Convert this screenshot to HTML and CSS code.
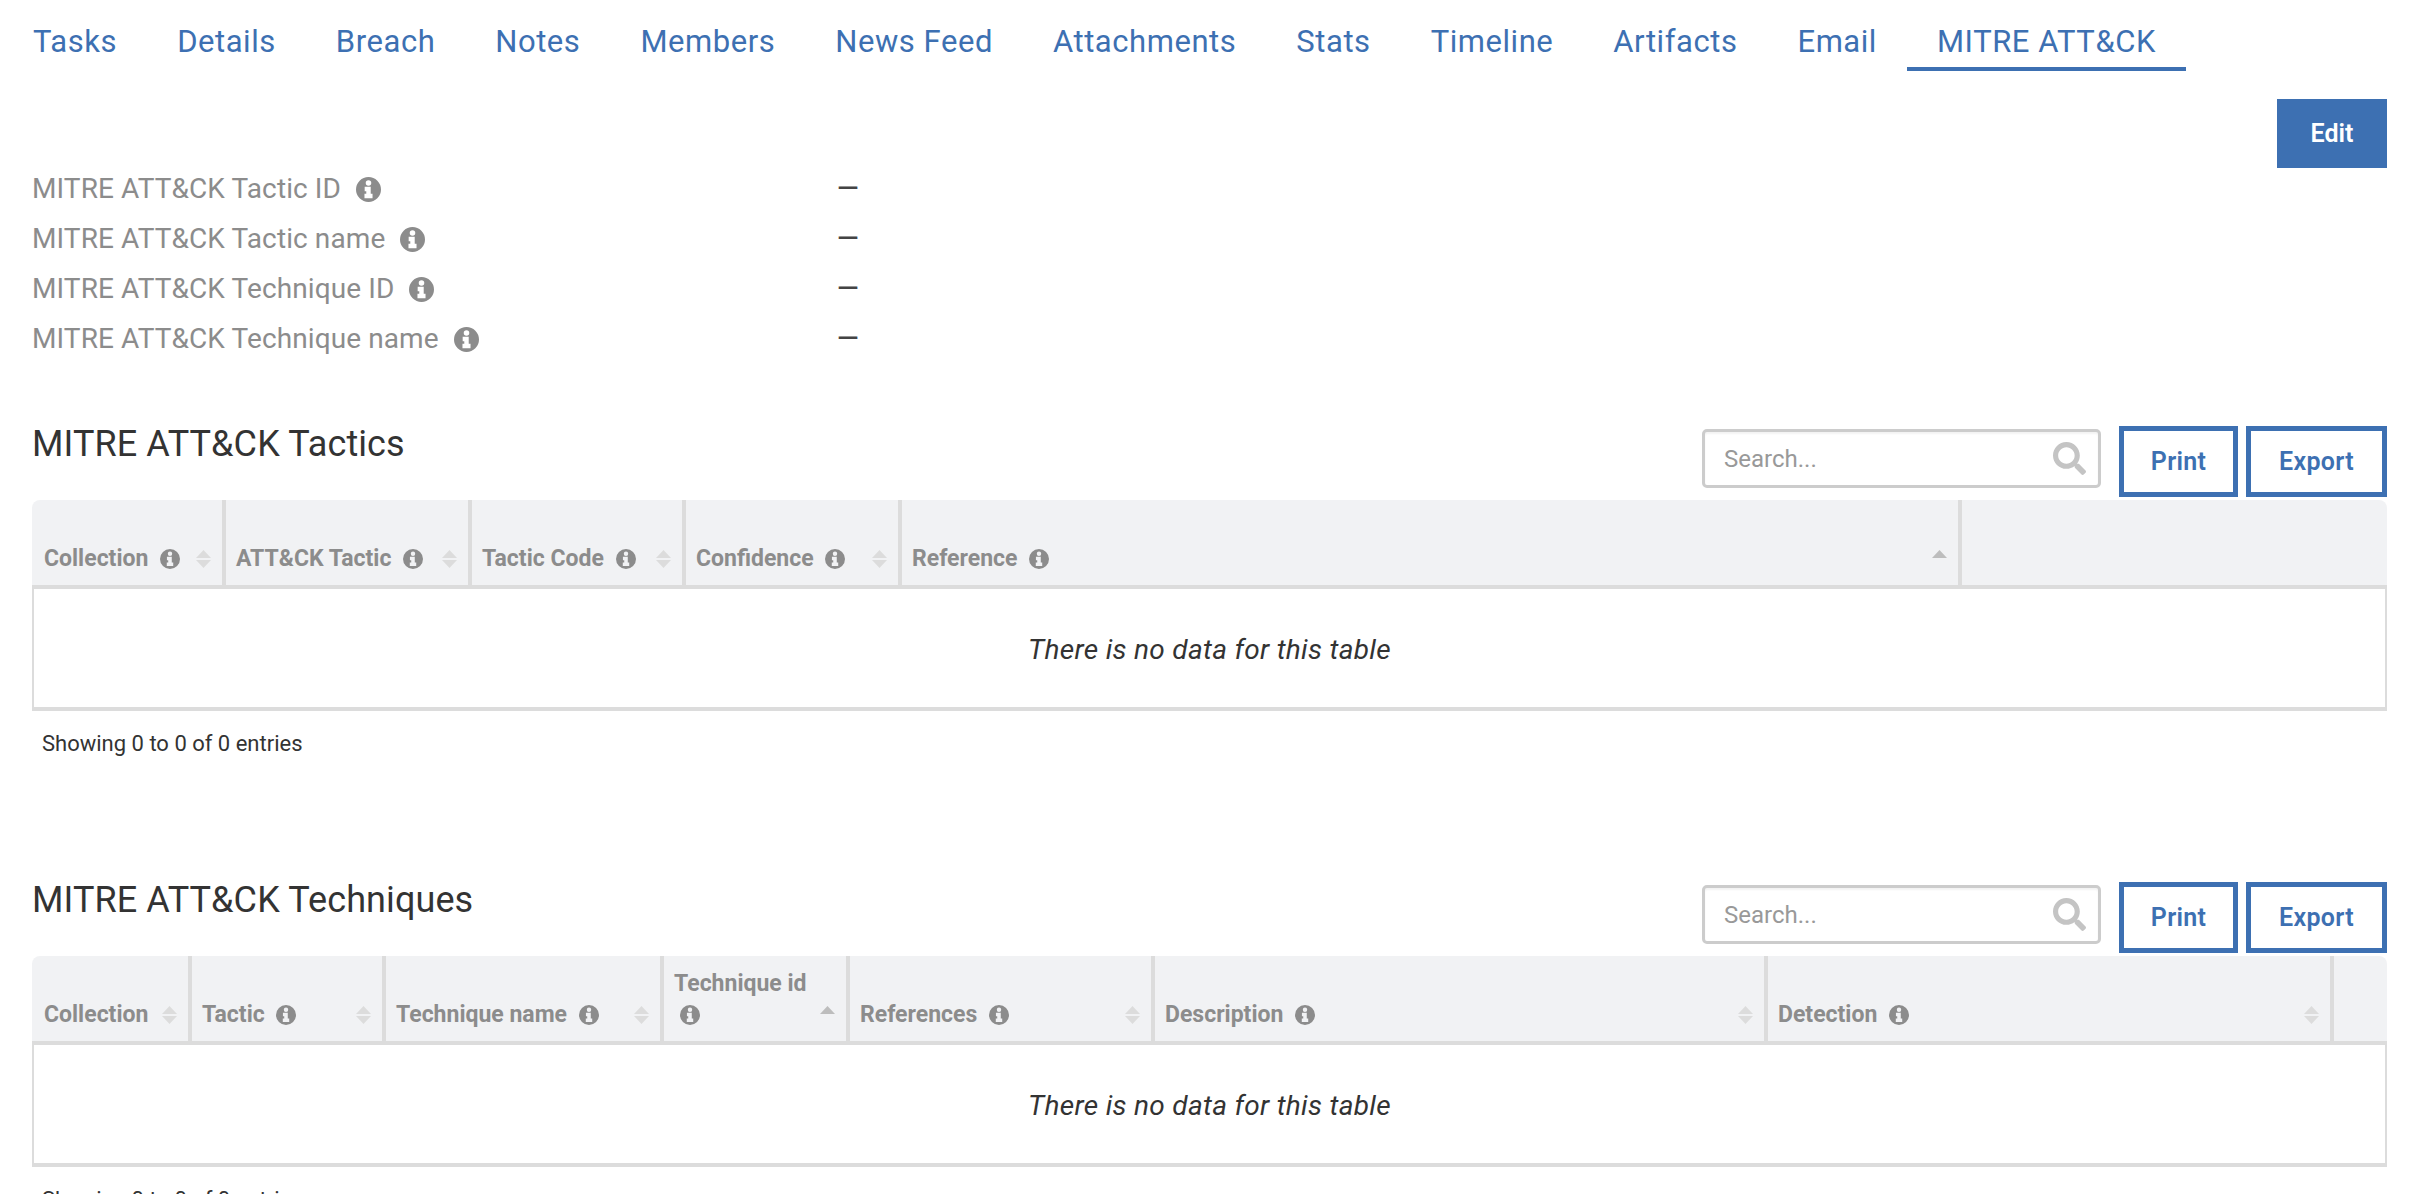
FILE: index.html
```html
<!DOCTYPE html>
<html>
<head>
    <title>MITRE ATT&amp;CK</title>
    <link rel="stylesheet" href="styles.css">
</head>
<body>
<svg class="defs" width="0" height="0">
    <symbol id="info" viewBox="8 8 496 496">
        <path fill-rule="evenodd" d="M256 8a248 248 0 1 0 0 496a248 248 0 1 0 0-496zM256 70a55 55 0 1 0 0 110a55 55 0 1 0 0-110zM180 200h120v140h36v90H176v-90h36v-50h-32z"/>
    </symbol>
    <symbol id="search" viewBox="0 0 512 512">
        <path d="M505 442.7L405.3 343c-4.5-4.5-10.6-7-17-7H372c27.6-35.3 44-79.7 44-128C416 93.1 322.9 0 208 0S0 93.1 0 208s93.1 208 208 208c48.3 0 92.7-16.4 128-44v16.3c0 6.4 2.5 12.5 7 17l99.7 99.7c9.4 9.4 24.6 9.4 33.9 0l28.3-28.3c9.4-9.4 9.4-24.6.1-34zM208 336c-70.7 0-128-57.2-128-128 0-70.7 57.2-128 128-128 70.7 0 128 57.2 128 128 0 70.7-57.2 128-128 128z"/>
    </symbol>
    <symbol id="sort" viewBox="0 0 15 18">
        <path d="M7.5 0l7.5 8H0z"/>
        <path d="M0 10h15l-7.5 8z"/>
    </symbol>
    <symbol id="sorted" viewBox="0 0 15 18">
        <path d="M7.5 0l7.5 8H0z"/>
    </symbol>
</svg>

<nav class="tabs">
    <a class="tab">Tasks</a>
    <a class="tab">Details</a>
    <a class="tab">Breach</a>
    <a class="tab">Notes</a>
    <a class="tab">Members</a>
    <a class="tab">News Feed</a>
    <a class="tab">Attachments</a>
    <a class="tab">Stats</a>
    <a class="tab">Timeline</a>
    <a class="tab">Artifacts</a>
    <a class="tab">Email</a>
    <a class="tab active">MITRE ATT&amp;CK</a>
</nav>

<div class="page">
    <div class="summary">
        <dl class="fields">
            <div class="field">
                <dt>MITRE ATT&amp;CK Tactic ID <svg class="info big"><use href="#info"/></svg></dt>
                <dd>&mdash;</dd>
            </div>
            <div class="field">
                <dt>MITRE ATT&amp;CK Tactic name <svg class="info big"><use href="#info"/></svg></dt>
                <dd>&mdash;</dd>
            </div>
            <div class="field">
                <dt>MITRE ATT&amp;CK Technique ID <svg class="info big"><use href="#info"/></svg></dt>
                <dd>&mdash;</dd>
            </div>
            <div class="field">
                <dt>MITRE ATT&amp;CK Technique name <svg class="info big"><use href="#info"/></svg></dt>
                <dd>&mdash;</dd>
            </div>
        </dl>
        <button class="edit">Edit</button>
    </div>

    <section class="section">
        <div class="section-head">
            <h2>MITRE ATT&amp;CK Tactics</h2>
            <div class="controls">
                <div class="search">
                    <span>Search...</span>
                    <svg><use href="#search"/></svg>
                </div>
                <button class="outline print">Print</button>
                <button class="outline export">Export</button>
            </div>
        </div>
        <table>
            <colgroup>
                <col class="t1">
                <col class="t2">
                <col class="t3">
                <col class="t4">
                <col class="t5">
                <col>
            </colgroup>
            <thead>
            <tr>
                <th><div class="cell"><span>Collection <svg class="info"><use href="#info"/></svg></span><svg class="sort"><use href="#sort"/></svg></div></th>
                <th><div class="cell"><span>ATT&amp;CK Tactic <svg class="info"><use href="#info"/></svg></span><svg class="sort"><use href="#sort"/></svg></div></th>
                <th><div class="cell"><span>Tactic Code <svg class="info"><use href="#info"/></svg></span><svg class="sort"><use href="#sort"/></svg></div></th>
                <th><div class="cell"><span>Confidence <svg class="info"><use href="#info"/></svg></span><svg class="sort"><use href="#sort"/></svg></div></th>
                <th><div class="cell"><span>Reference <svg class="info"><use href="#info"/></svg></span><svg class="sort on"><use href="#sorted"/></svg></div></th>
                <th></th>
            </tr>
            </thead>
            <tbody>
            <tr>
                <td colspan="6">There is no data for this table</td>
            </tr>
            </tbody>
        </table>
        <div class="showing">Showing 0 to 0 of 0 entries</div>
    </section>

    <section class="section">
        <div class="section-head">
            <h2>MITRE ATT&amp;CK Techniques</h2>
            <div class="controls">
                <div class="search">
                    <span>Search...</span>
                    <svg><use href="#search"/></svg>
                </div>
                <button class="outline print">Print</button>
                <button class="outline export">Export</button>
            </div>
        </div>
        <table>
            <colgroup>
                <col class="c1">
                <col class="c2">
                <col class="c3">
                <col class="c4">
                <col class="c5">
                <col class="c6">
                <col class="c7">
                <col>
            </colgroup>
            <thead>
            <tr>
                <th><div class="cell"><span>Collection</span><svg class="sort"><use href="#sort"/></svg></div></th>
                <th><div class="cell"><span>Tactic <svg class="info"><use href="#info"/></svg></span><svg class="sort"><use href="#sort"/></svg></div></th>
                <th><div class="cell"><span>Technique name <svg class="info"><use href="#info"/></svg></span><svg class="sort"><use href="#sort"/></svg></div></th>
                <th><div class="cell"><span>Technique id<br><svg class="info"><use href="#info"/></svg></span><svg class="sort on"><use href="#sorted"/></svg></div></th>
                <th><div class="cell"><span>References <svg class="info"><use href="#info"/></svg></span><svg class="sort"><use href="#sort"/></svg></div></th>
                <th><div class="cell"><span>Description <svg class="info"><use href="#info"/></svg></span><svg class="sort"><use href="#sort"/></svg></div></th>
                <th><div class="cell"><span>Detection <svg class="info"><use href="#info"/></svg></span><svg class="sort"><use href="#sort"/></svg></div></th>
                <th></th>
            </tr>
            </thead>
            <tbody>
            <tr>
                <td colspan="8">There is no data for this table</td>
            </tr>
            </tbody>
        </table>
        <div class="showing">Showing 0 to 0 of 0 entries</div>
    </section>
</div>
</body>
</html>
```

FILE: styles.css
```css
html, body {
    height: 100%;
    margin: 0;
    overflow: hidden;
}

body {
    background-color: #ffffff;
    color: #333333;
    font-family: "Roboto", "Liberation Sans", sans-serif;
}

.defs {
    display: block;
    height: 0;
}

.tabs {
    display: flex;
    height: 71px;
    padding-left: 3px;
}

.tab {
    border-bottom: 4px solid transparent;
    box-sizing: border-box;
    color: #3d70b2;
    font-size: 31px;
    letter-spacing: 0.55px;
    line-height: 84px;
    height: 71px;
    padding: 0 30px;
    white-space: nowrap;
}

.tab.active {
    border-bottom-color: #3d70b2;
}

.page {
    padding: 0 47px 0 32px;
}

.summary {
    display: flex;
    justify-content: space-between;
    align-items: flex-start;
    padding-top: 28px;
}

.fields {
    margin: 65px 0 0;
}

.field {
    display: flex;
    height: 50px;
    line-height: 50px;
    font-size: 28px;
}

.field dt {
    color: #8c8c8c;
    letter-spacing: 0.1px;
    width: 805px;
}

.field dd {
    margin: 0;
    color: #444444;
    font-weight: 500;
}

.info {
    fill: #8c8c8c;
    height: 20px;
    margin-left: 6px;
    vertical-align: -3px;
    width: 20px;
}

.info.big {
    height: 25px;
    margin-left: 8px;
    vertical-align: -4px;
    width: 25px;
}

button {
    font-family: inherit;
    cursor: pointer;
}

.edit {
    background-color: #3d70b2;
    border: none;
    color: #ffffff;
    font-size: 25px;
    font-weight: 600;
    height: 69px;
    width: 110px;
}

.section {
    margin: 62px 0 126px;
}

.section-head {
    display: flex;
    justify-content: space-between;
    align-items: flex-start;
    height: 74px;
}

h2 {
    font-size: 36px;
    font-weight: 400;
    letter-spacing: 0.1px;
    line-height: 36px;
    margin: 0;
}

.controls {
    display: flex;
    align-items: flex-start;
}

.search {
    align-items: center;
    border: 3px solid #cccccc;
    border-radius: 5px;
    box-shadow: inset 0 2px 2px rgba(0, 0, 0, 0.05);
    box-sizing: border-box;
    color: #999999;
    display: flex;
    font-size: 24px;
    height: 59px;
    justify-content: space-between;
    margin: 3px 18px 0 0;
    padding: 0 12px 0 19px;
    width: 399px;
}

.search svg {
    fill: #c4c4c4;
    height: 33px;
    width: 33px;
}

.outline {
    background-color: #ffffff;
    border: 5px solid #3d70b2;
    color: #3d70b2;
    font-size: 25px;
    font-weight: 600;
    height: 71px;
    letter-spacing: 0.3px;
    padding: 0;
}

.print {
    margin-right: 8px;
    width: 119px;
}

.export {
    width: 141px;
}

table {
    border-collapse: separate;
    border-spacing: 0;
    table-layout: fixed;
    width: 100%;
}

th {
    background-color: #f1f2f4;
    border-bottom: 4px solid #dcdcdc;
    border-right: 4px solid #dcdcdc;
    box-sizing: border-box;
    color: #8c8c8c;
    font-size: 23px;
    font-weight: 700;
    height: 89px;
    line-height: 31px;
    padding: 0 11px 11px 10px;
    text-align: left;
    vertical-align: bottom;
}

th:first-child {
    border-top-left-radius: 8px;
    padding-left: 12px;
}

th:last-child {
    border-right: none;
    border-top-right-radius: 8px;
}

.cell {
    align-items: flex-end;
    display: flex;
    justify-content: space-between;
}

.sort {
    fill: #dcdcdc;
    flex-shrink: 0;
    height: 18px;
    margin-bottom: 6px;
    width: 15px;
}

.sort.on {
    fill: #bdbdbd;
}

td {
    border: solid #dcdcdc;
    border-width: 0 2px 4px;
    box-sizing: border-box;
    font-size: 28px;
    font-style: italic;
    height: 122px;
    letter-spacing: 0.3px;
    padding: 2px 0 0;
    text-align: center;
}

.showing {
    font-size: 22px;
    line-height: 24px;
    margin-top: 21px;
    padding-left: 10px;
}

/* tactics columns */
.t1 { width: 194px; }
.t2 { width: 246px; }
.t3 { width: 214px; }
.t4 { width: 216px; }
.t5 { width: 1060px; }

/* techniques columns */
.c1 { width: 160px; }
.c2 { width: 194px; }
.c3 { width: 278px; }
.c4 { width: 186px; }
.c5 { width: 305px; }
.c6 { width: 613px; }
.c7 { width: 566px; }
```
